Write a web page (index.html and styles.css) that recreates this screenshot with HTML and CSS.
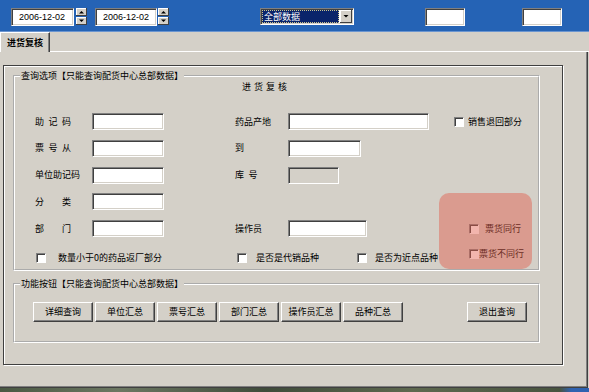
FILE: index.html
```html
<!DOCTYPE html>
<html lang="zh-CN">
  <head>
    <meta charset="UTF-8" />
    <title>进货复核</title>
    <link rel="stylesheet" href="styles.css">
  </head>
  <body>
    <!-- top toolbar: date range, data scope, two spare boxes -->
    <div class="topbar">
      <div class="date-field">2006-12-02</div>
      <svg class="spin" width="11" height="17" viewBox="0 0 11 17">
        <rect x="0" y="0" width="11" height="8" fill="#d4d0c8" />
        <rect x="0" y="0" width="10" height="1" fill="#fff" />
        <rect x="0" y="0" width="1" height="7" fill="#fff" />
        <rect x="0" y="7" width="11" height="1" fill="#404040" />
        <rect x="10" y="0" width="1" height="8" fill="#404040" />
        <polygon points="3,5.5 8,5.5 5.5,3" fill="#000" />
        <rect x="0" y="9" width="11" height="8" fill="#d4d0c8" />
        <rect x="0" y="9" width="10" height="1" fill="#fff" />
        <rect x="0" y="9" width="1" height="7" fill="#fff" />
        <rect x="0" y="16" width="11" height="1" fill="#404040" />
        <rect x="10" y="9" width="1" height="8" fill="#404040" />
        <polygon points="3,11.5 8,11.5 5.5,14" fill="#000" />
      </svg>
      <div class="date-field second">2006-12-02</div>
      <svg class="spin tight" width="11" height="17" viewBox="0 0 11 17">
        <rect x="0" y="0" width="11" height="8" fill="#d4d0c8" />
        <rect x="0" y="0" width="10" height="1" fill="#fff" />
        <rect x="0" y="0" width="1" height="7" fill="#fff" />
        <rect x="0" y="7" width="11" height="1" fill="#404040" />
        <rect x="10" y="0" width="1" height="8" fill="#404040" />
        <polygon points="3,5.5 8,5.5 5.5,3" fill="#000" />
        <rect x="0" y="9" width="11" height="8" fill="#d4d0c8" />
        <rect x="0" y="9" width="10" height="1" fill="#fff" />
        <rect x="0" y="9" width="1" height="7" fill="#fff" />
        <rect x="0" y="16" width="11" height="1" fill="#404040" />
        <rect x="10" y="9" width="1" height="8" fill="#404040" />
        <polygon points="3,11.5 8,11.5 5.5,14" fill="#000" />
      </svg>
      <div class="combo">
        <span class="combo-value">全部数据</span>
        <svg class="combo-btn" width="12" height="13" viewBox="0 0 12 13">
          <rect x="0" y="0" width="12" height="13" fill="#d4d0c8" />
          <rect x="0" y="0" width="11" height="1" fill="#fff" />
          <rect x="0" y="0" width="1" height="12" fill="#fff" />
          <rect x="0" y="12" width="12" height="1" fill="#404040" />
          <rect x="11" y="0" width="1" height="13" fill="#404040" />
          <polygon points="3.5,5 8.5,5 6,7.5" fill="#000" />
        </svg>
      </div>
      <div class="blank-box box-a"></div>
      <div class="blank-box box-b"></div>
    </div>

    <!-- tab header -->
    <div class="tab-strip">
      <div class="tab">进货复核</div>
      <div class="tab-rest"></div>
    </div>

    <div class="tab-page">
      <div class="frame">
        <!-- query options -->
        <fieldset class="group query">
          <legend>查询选项【只能查询配货中心总部数据】</legend>
          <div class="query-title">进货复核</div>
          <div class="query-grid">
            <span class="label row-start">助 记 码</span>
            <input class="field" type="text" />
            <span class="label">药品产地</span>
            <input class="field field-wide" type="text" />
            <label class="check gap-4"><input type="checkbox" />销售退回部分</label>

            <span class="label row-start">票 号 从</span>
            <input class="field" type="text" />
            <span class="label">到</span>
            <input class="field field-to" type="text" />

            <span class="label row-start">单位助记码</span>
            <input class="field" type="text" />
            <span class="label">库 号</span>
            <input class="field field-store" type="text" disabled />

            <span class="label row-start">分　　类</span>
            <input class="field" type="text" />

            <span class="label row-start">部　　门</span>
            <input class="field" type="text" />
            <span class="label">操作员</span>
            <input class="field field-op" type="text" />
            <label class="check pink-col gap-6"><input type="checkbox" />票货同行</label>

            <div class="check-row left">
              <label class="check gap-12"><input type="checkbox" />数量小于0的药品返厂部分</label>
            </div>
            <div class="check-row middle">
              <label class="check gap-9"><input type="checkbox" />是否是代销品种</label>
              <label class="check gap-8 near"><input type="checkbox" />是否为近点品种</label>
            </div>
            <label class="check pink-col last"><input type="checkbox" />票货不同行</label>

            <!-- marker drawn over the two shipping options -->
            <div class="highlight"></div>
          </div>
        </fieldset>

        <!-- function buttons -->
        <fieldset class="group actions">
          <legend>功能按钮【只能查询配货中心总部数据】</legend>
          <div class="button-row">
            <button type="button" class="win-button">详细查询</button>
            <button type="button" class="win-button">单位汇总</button>
            <button type="button" class="win-button">票号汇总</button>
            <button type="button" class="win-button">部门汇总</button>
            <button type="button" class="win-button">操作员汇总</button>
            <button type="button" class="win-button">品种汇总</button>
            <button type="button" class="win-button exit">退出查询</button>
          </div>
        </fieldset>
      </div>
    </div>

    <div class="photo-strip"></div>
  </body>
</html>
```

FILE: styles.css
```css
html {
  height: 100%;
}
body {
  margin: 0;
  width: 589px;
  height: 392px;
  overflow: hidden;
  background: #d4d0c8;
  font-family: "Noto Sans CJK SC", "Noto Sans", sans-serif;
  font-size: 9px;
  line-height: 12px;
  color: #000;
}

/* Top toolbar */
.topbar {
  display: flex;
  align-items: flex-start;
  height: 32px;
  box-sizing: border-box;
  padding: 8px 0 0 11px;
  background: #2563b5;
  border-bottom: 1px solid #6b95d0;
}

/* sunken white boxes */
.date-field,
.combo,
.blank-box,
.field {
  box-sizing: border-box;
  background: #fff;
  border: 1px solid;
  border-color: #808080 #fff #fff #808080;
  box-shadow: inset 1px 1px 0 #404040, inset -1px -1px 0 #d4d0c8;
}

.date-field {
  width: 63px;
  height: 18px;
  padding-left: 7px;
  font-family: "Liberation Sans", Arial, sans-serif;
  line-height: 16px;
}

.date-field.second {
  width: 62px;
  margin-left: 8px;
}

.spin {
  display: block;
  margin-left: 2px;
}

.spin.tight {
  margin-left: 1px;
}

.combo {
  display: flex;
  width: 94px;
  height: 17px;
  padding: 1px;
  margin-left: 91px;
}

.combo-value {
  flex: 1;
  box-sizing: border-box;
  height: 13px;
  padding-left: 1px;
  background: #0a246a;
  color: #fff;
  border: 1px dotted #c9c38e;
  line-height: 11px;
}

.combo-btn {
  display: block;
  margin-left: 1px;
}

.blank-box {
  width: 40px;
  height: 18px;
}

.box-a {
  margin-left: 71px;
}

.box-b {
  margin-left: 57px;
}

/* Tabs */
.tab-strip {
  display: flex;
  height: 20px;
}

.tab {
  width: 50px;
  box-sizing: border-box;
  border-left: 1px solid #fff;
  border-top: 1px solid #fff;
  border-right: 1px solid #404040;
  box-shadow: inset -1px 0 0 #808080;
  font-weight: bold;
  text-align: center;
  line-height: 19px;
}

.tab-rest {
  flex: 1;
  border-bottom: 1px solid #fff;
}

.tab-page {
  width: 588px;
  height: 336px;
  box-sizing: border-box;
  padding: 13px 0 0 3px;
  border-right: 1px solid #404040;
  border-bottom: 1px solid #404040;
  box-shadow: inset -1px -1px 0 #808080;
}

.frame {
  width: 560px;
  height: 300px;
  box-sizing: border-box;
  padding: 4px 0 0 9px;
  border: 1px solid #404040;
  box-shadow: 1px 1px 0 #fff, inset 1px 1px 0 #fff;
}

/* Group boxes */
.group {
  margin: 0;
  padding: 0;
  min-width: 0;
  width: 527px;
  box-sizing: border-box;
  border: 2px groove #fff;
}

.group legend {
  margin-left: 5px;
  padding: 0 1px;
  line-height: 12px;
}

.query-title {
  margin-left: 227px;
  line-height: 10px;
  letter-spacing: 3px;
}

.query-grid {
  position: relative;
  display: grid;
  grid-template-columns: 57px 143px 53px 166px 1fr;
  grid-template-rows: repeat(5, 17px) 22px;
  row-gap: 9.75px;
  align-items: center;
  margin: 21px 0 0 20px;
}

.label {
  word-spacing: 2.5px;
  white-space: pre;
}

.row-start {
  grid-column: 1;
}

.field {
  width: 72px;
  height: 17px;
  margin: 0;
  padding: 0 3px;
  font: inherit;
  outline: none;
}

.field-wide {
  width: 141px;
}

.field-to {
  width: 73px;
}

.field-store {
  width: 51px;
  background: #d4d0c8;
}

.field-op {
  width: 79px;
}

/* Checkboxes */
.check {
  display: flex;
  align-items: center;
  white-space: nowrap;
}

.check input {
  appearance: none;
  width: 10px;
  height: 10px;
  margin: 0;
  box-sizing: border-box;
  background: #fff;
  border: 1px solid;
  border-color: #808080 #fff #fff #808080;
  box-shadow: inset 1px 1px 0 #404040;
}

.gap-4 { gap: 4px; }
.gap-6 { gap: 6px; }
.gap-8 { gap: 8px; }
.gap-9 { gap: 9px; }
.gap-12 { gap: 12px; }

.check-row {
  display: flex;
  align-items: center;
}

.check-row.left {
  grid-column: 1 / 3;
  padding-left: 1px;
}

.check-row.middle {
  grid-column: 3 / 5;
  padding-left: 2px;
}

.check.near {
  margin-left: 38px;
}

.pink-col {
  grid-column: 5;
  margin-left: 15px;
}

.pink-col.last {
  align-self: start;
  margin-top: 1px;
}

.highlight {
  position: absolute;
  left: 404px;
  top: 80px;
  width: 93px;
  height: 76px;
  border-radius: 10px;
  background: rgba(227, 90, 73, 0.45);
  pointer-events: none;
}

/* Function buttons */
.actions {
  margin-top: 7px;
}

.button-row {
  display: flex;
  gap: 2px;
  padding: 12px 0 19px 18px;
}

.win-button {
  width: 60px;
  height: 20px;
  padding: 0;
  background: #d4d0c8;
  border: 1px solid;
  border-color: #fff #404040 #404040 #fff;
  box-shadow: inset -1px -1px 0 #808080;
  font: inherit;
  color: #000;
}

.win-button.exit {
  margin-left: 62px;
}

.photo-strip {
  height: 4px;
  background: linear-gradient(90deg, #4a5843, #6c7762 20%, #3f4b3a 45%, #5e684f 70%, #48543f 95%, #2f62b0 97%);
}
```
